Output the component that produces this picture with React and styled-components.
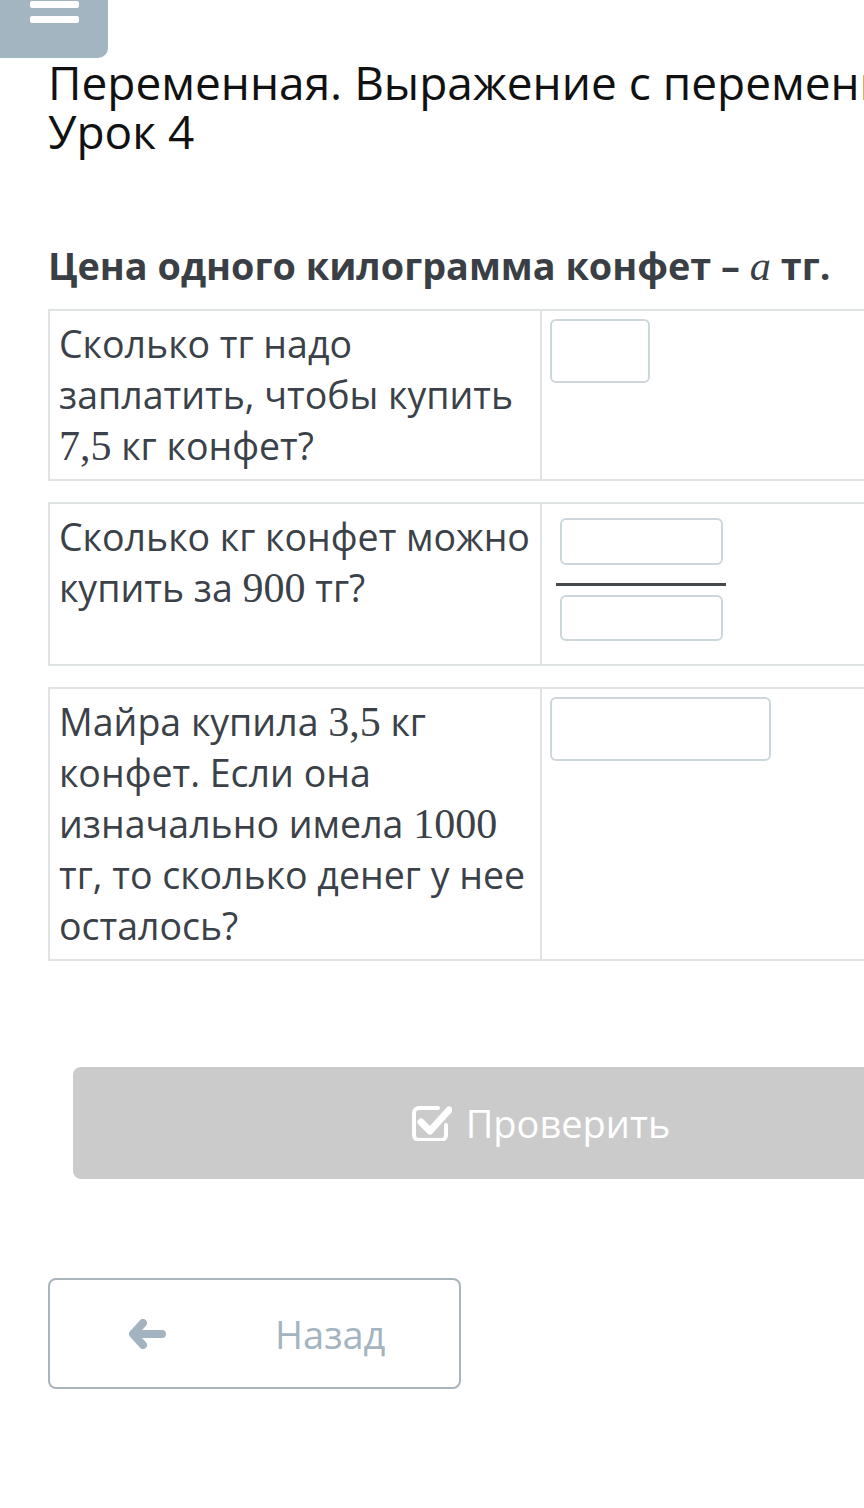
import React from 'react'
import styled, { createGlobalStyle } from 'styled-components'

const GlobalStyle = createGlobalStyle`
  html, body {
    margin: 0;
    padding: 0;
    background: #fff;
    overflow: hidden;
  }
  body {
    font-family: 'Open Sans', 'Noto Sans', sans-serif;
  }
`

const Page = styled.div`
  width: 1032px;
  min-height: 1508px;
`

const MenuButton = styled.button`
  display: flex;
  flex-direction: column;
  align-items: center;
  justify-content: flex-end;
  gap: 8px;
  width: 108px;
  height: 58px;
  padding: 0 0 35px;
  border: 0;
  background: #a3b5c1;
  border-bottom-right-radius: 10px;
  overflow: hidden;
`

const Bar = styled.span`
  display: block;
  width: 49px;
  height: 7px;
  border-radius: 2px;
  background: #fff;
`

const Content = styled.div`
  padding: 0 0 0 48px;
`

const Title = styled.h1`
  margin: 0;
  font-size: 46px;
  line-height: 49px;
  font-weight: 400;
  color: #111;
  white-space: nowrap;
`

const Question = styled.h2`
  margin: 87px 0 20px;
  font-size: 37.8px;
  line-height: 46px;
  font-weight: 700;
  color: #3a3f46;
`

const Math = styled.span`
  font-family: 'Liberation Serif', 'DejaVu Serif', serif;
  font-style: ${p => (p.$italic ? 'italic' : 'normal')};
  font-weight: 400;
  font-size: 1.12em;
  line-height: 1;
`

const Rows = styled.div`
  display: flex;
  flex-direction: column;
  gap: 21px;
`

const Row = styled.div`
  display: grid;
  grid-template-columns: 492px 1fr;
  border: 2px solid #dfe3e3;
`

const TextCell = styled.div`
  padding: 7px 8px 8px 9px;
  font-size: 37.5px;
  line-height: 51px;
  color: #3b4148;
  border-right: 2px solid #dfe3e3;
`

const AnswerCell = styled.div`
  padding: ${p => p.$pad || '8px 8px'};
`

const Field = styled.div`
  width: ${p => p.$w}px;
  height: ${p => p.$h}px;
  box-sizing: border-box;
  border: 2px solid #cdd6da;
  border-radius: 6px;
  background: #fff;
`

const Fraction = styled.div`
  display: flex;
  flex-direction: column;
  align-items: center;
  width: 170px;
  gap: 9px;
`

const FractionLine = styled.div`
  width: 170px;
  height: 3px;
  background: #45484d;
  margin-top: 9px;
`

const CheckButton = styled.button`
  display: flex;
  align-items: center;
  justify-content: center;
  gap: 14px;
  width: 936px;
  height: 112px;
  margin: 106px 0 0 25px;
  border: 0;
  border-radius: 8px;
  background: #cbcbcb;
  color: #fff;
  font-family: 'Open Sans', sans-serif;
  font-size: 38px;
`

const BackButton = styled.button`
  display: flex;
  align-items: center;
  width: 413px;
  height: 111px;
  margin-top: 99px;
  padding: 0 0 0 78px;
  box-sizing: border-box;
  border: 2px solid #aab4bb;
  border-radius: 8px;
  background: #fff;
  color: #a3b4c0;
  font-family: 'Open Sans', sans-serif;
  font-size: 38px;
`

const BackLabel = styled.span`
  margin-left: 109px;
`

const CheckIcon = () => (
  <svg width="40" height="36" viewBox="0 0 40 36">
    <path d="M26 3H7a5 5 0 0 0-5 5v22a5 5 0 0 0 5 5h22a5 5 0 0 0 5-5V20"
      fill="none" stroke="#fff" strokeWidth="4" strokeLinecap="round" />
    <path d="M9 17l9 9L37 5" fill="none" stroke="#fff" strokeWidth="7" strokeLinejoin="round" strokeLinecap="round" />
  </svg>
)

const ArrowLeft = () => (
  <svg width="38" height="30" viewBox="0 0 38 30">
    <path d="M15 4L5 15l10 11M7 15h27" fill="none" stroke="#a3b4c0" strokeWidth="8"
      strokeLinecap="round" strokeLinejoin="round" />
  </svg>
)

export default function App() {
  return (
    <Page>
      <GlobalStyle />
      <MenuButton aria-label="menu">
        <Bar />
        <Bar />
      </MenuButton>
      <Content>
        <Title>
          Переменная. Выражение с переменной.
          <br />
          Урок 4
        </Title>
        <Question>
          Цена одного килограмма конфет – <Math $italic>a</Math> тг.
        </Question>
        <Rows>
          <Row>
            <TextCell>
              Сколько тг надо заплатить, чтобы купить <Math>7,5</Math> кг конфет?
            </TextCell>
            <AnswerCell>
              <Field $w={100} $h={64} />
            </AnswerCell>
          </Row>
          <Row>
            <TextCell>
              Сколько кг конфет можно купить за <Math>900</Math> тг?
            </TextCell>
            <AnswerCell $pad="14px 14px 23px">
              <Fraction>
                <Field $w={163} $h={47} />
                <FractionLine />
                <Field $w={163} $h={46} />
              </Fraction>
            </AnswerCell>
          </Row>
          <Row>
            <TextCell>
              Майра купила <Math>3,5</Math> кг конфет. Если она изначально имела <Math>1000</Math> тг, то сколько денег у нее осталось?
            </TextCell>
            <AnswerCell>
              <Field $w={221} $h={64} />
            </AnswerCell>
          </Row>
        </Rows>
        <CheckButton>
          <CheckIcon />
          Проверить
        </CheckButton>
        <BackButton>
          <ArrowLeft />
          <BackLabel>Назад</BackLabel>
        </BackButton>
      </Content>
    </Page>
  )
}
